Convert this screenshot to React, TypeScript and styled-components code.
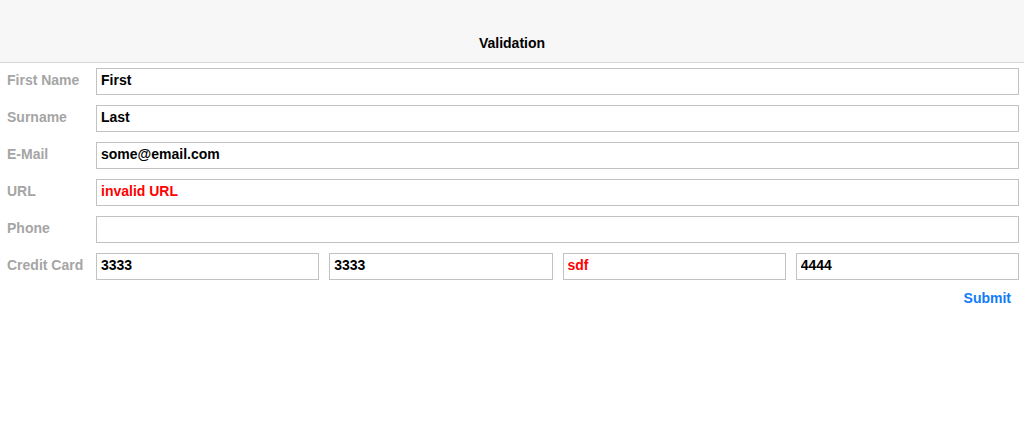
import styled, { createGlobalStyle } from 'styled-components';

const GlobalStyle = createGlobalStyle`
  html, body {
    margin: 0;
    padding: 0;
    background: #fff;
    font-family: "Liberation Sans", Arial, sans-serif;
  }
`;

const Page = styled.div`
  width: 1024px;
  height: 446px;
  background: #fff;
`;

const TitleBar = styled.header`
  height: 63px;
  background: #f7f7f7;
  border-bottom: 1px solid #d6d6d6;
  display: flex;
  align-items: flex-end;
  justify-content: center;
  padding-bottom: 11px;
  box-sizing: border-box;
  font-size: 14px;
  font-weight: bold;
  color: #000;
`;

const Form = styled.form`
  display: flex;
  flex-direction: column;
  gap: 10px;
  padding: 5px 5px 0 7px;
`;

const Row = styled.div`
  display: flex;
  align-items: center;
`;

const Label = styled.label`
  width: 89px;
  flex-shrink: 0;
  padding-bottom: 3px;
  font-size: 14px;
  font-weight: bold;
  color: #a5a5a5;
`;

const Fields = styled.div`
  flex: 1;
  display: flex;
  gap: 10px;
`;

const Field = styled.input<{ $invalid?: boolean }>`
  flex: 1;
  min-width: 0;
  height: 27px;
  box-sizing: border-box;
  border: 1px solid #c2c2c2;
  border-radius: 0;
  padding: 0 4px 3px;
  margin: 0;
  font-family: "Liberation Sans", Arial, sans-serif;
  font-size: 14px;
  font-weight: bold;
  color: ${(p) => (p.$invalid ? '#ff0000' : '#000')};
  background: #fff;
  outline: none;
`;

const Actions = styled.div`
  display: flex;
  justify-content: flex-end;
  padding: 0 8px 0 0;
`;

const SubmitButton = styled.button`
  border: none;
  background: none;
  padding: 0;
  font-family: "Liberation Sans", Arial, sans-serif;
  font-size: 14px;
  font-weight: bold;
  color: #107bfb;
  cursor: pointer;
`;

const fields = [
  { label: 'First Name', value: 'First' },
  { label: 'Surname', value: 'Last' },
  { label: 'E-Mail', value: 'some@email.com' },
  { label: 'URL', value: 'invalid URL', invalid: true },
  { label: 'Phone', value: '' },
];

const card = [
  { value: '3333' },
  { value: '3333' },
  { value: 'sdf', invalid: true },
  { value: '4444' },
];

export default function App() {
  return (
    <Page>
      <GlobalStyle />
      <TitleBar>Validation</TitleBar>
      <Form onSubmit={(e) => e.preventDefault()}>
        {fields.map((f) => (
          <Row key={f.label}>
            <Label>{f.label}</Label>
            <Fields>
              <Field defaultValue={f.value} $invalid={f.invalid} />
            </Fields>
          </Row>
        ))}
        <Row>
          <Label>Credit Card</Label>
          <Fields>
            {card.map((c, i) => (
              <Field key={i} defaultValue={c.value} $invalid={c.invalid} />
            ))}
          </Fields>
        </Row>
        <Actions>
          <SubmitButton type="submit">Submit</SubmitButton>
        </Actions>
      </Form>
    </Page>
  );
}
